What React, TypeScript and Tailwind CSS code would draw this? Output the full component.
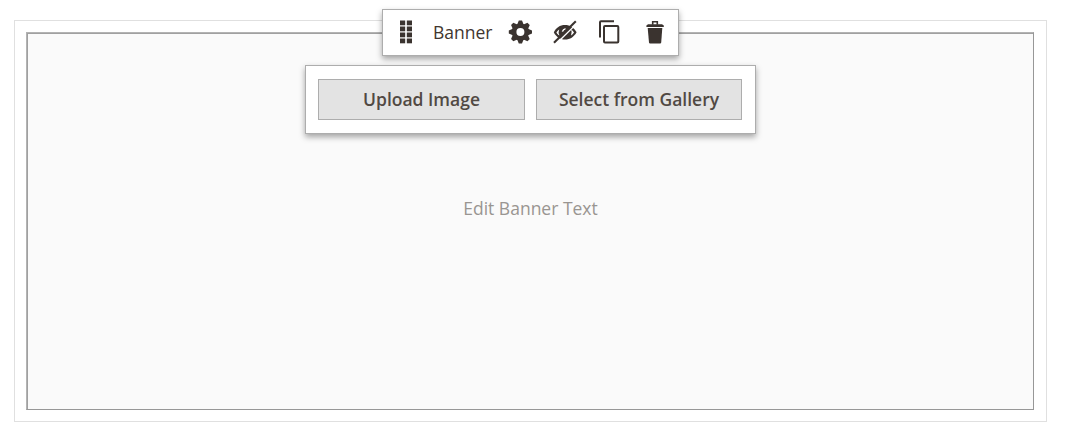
import React from "react";

function GripIcon() {
  return (
    <svg className="block h-6 w-[12px]" viewBox="0 0 12 24" fill="#3a332f">
      {[0.5, 6.5, 12.5, 18.5].map((y) => (
        <React.Fragment key={y}>
          <rect x="0" y={y} width="5.2" height="4.8" />
          <rect x="6.8" y={y} width="5.2" height="4.8" />
        </React.Fragment>
      ))}
    </svg>
  );
}

function GearIcon() {
  return (
    <svg className="block size-6" viewBox="0 0 24 24" fill="#3a332f">
      <g transform="translate(0.4 0)">
        {[0, 45, 90, 135, 180, 225, 270, 315].map((a) => (
          <path key={a} d="M8.6 5 10.4 0.4h3.2L15.400 5z" transform={`rotate(${a} 12 12)`} />
        ))}
        <path fillRule="evenodd" d="M12 3.4a8.6 8.6 0 1 0 0 17.2 8.6 8.6 0 0 0 0-17.2zm0 4.6a4 4 0 1 1 0 8 4 4 0 0 1 0-8z" />
      </g>
    </svg>
  );
}

function HideIcon() {
  return (
    <svg className="block size-6" viewBox="0 0 24 24">
      <path fill="#3a332f" d="M.8 12.300C3 7.600 7 5 12 5s9 2.600 11.600 7.300C21 16.900 17 19.600 12 19.600S3 16.900.8 12.300z" />
      <path fill="#fff" d="M6.200 9.500a7 7 0 0 0 .3 6C5.100 14.700 4.200 13.700 3.400 12.400c.8-1.200 1.700-2.100 2.800-2.900z" />
      <path fill="#fff" d="M18.100 9.500c1.200.7 2.100 1.600 2.900 2.900-.8 1.300-1.800 2.200-3 3a7 7 0 0 0 .1-5.900z" />
      <path fill="#fff" d="M8.700 11.500Q9.500 8.500 12.500 8v1.500q-1.800.6-2.300 2.300z" />
      <path d="M3 24 25 2.400" stroke="#fff" strokeWidth="1.400" />
      <path d="M1 22.800 22.800 1.200" stroke="#3a332f" strokeWidth="2.100" />
    </svg>
  );
}

function CopyIcon() {
  return (
    <svg className="block h-6 w-[21px]" viewBox="0 0 21 24" fill="none" stroke="#3a332f" strokeWidth="2">
      <path d="M1 17.5V2.200q0-1 1-1h13" />
      <rect x="5" y="6" width="14.300" height="16.500" rx="1" />
    </svg>
  );
}

function TrashIcon() {
  return (
    <svg className="block h-6 w-[18px]" viewBox="0 0 18 24" fill="#3a332f">
      <path d="M6.700 4.800V1.700h4.600v3.100" fill="none" stroke="#3a332f" strokeWidth="1.600" />
      <path d="M2 4.300h14l1.800 1.200v1.500H.4V5.500z" />
      <path d="M1.700 7.900h14.600L15.200 22.600q-.1 1-1.100 1H4.100q-1 0-1.100-1z" />
    </svg>
  );
}

export default function App() {
  return (
    <div className="h-[438px] w-[1066px] bg-white pt-5 pl-[14px] font-['Open_Sans',sans-serif] text-[#41362f]">
      <div className="relative h-[402px] w-[1033px] border border-[#e0e0e0] p-[11px] pr-3">
        <div className="h-[378px] border border-[#b3b3b3] border-r-[#979797] border-b-[#979797]">
          <div className="flex h-[376px] flex-col items-center border-t border-l border-[#a0a0a0] bg-[#fafafa] pt-[31px]">
            <div className="flex h-[69px] w-[451px] shrink-0 gap-[11px] border border-[#adadad] bg-white px-3 py-[13px] shadow-[0_3px_6px_rgba(0,0,0,0.35)]">
              <button className="h-[41px] w-[207px] border border-[#adadad] bg-[#e3e3e3] text-[17.5px] font-semibold text-[#514943]">
                Upload Image
              </button>
              <button className="h-[41px] w-[206px] border border-[#adadad] bg-[#e3e3e3] text-[17.5px] font-semibold text-[#514943]">
                Select from Gallery
              </button>
            </div>
            <div className="mt-[62px] text-[17.5px] leading-6 text-[#999591]">Edit Banner Text</div>
          </div>
        </div>
        <div className="absolute top-[-12px] left-[367px] flex h-[47px] w-[297px] items-start border border-[#adadad] bg-white pt-[10px] pl-[17px] shadow-[0_3px_6px_rgba(0,0,0,0.35)]">
          <GripIcon />
          <span className="ml-[21px] w-[60px] text-[17.5px] leading-6 whitespace-nowrap">Banner</span>
          <div className="ml-[15px]"><GearIcon /></div>
          <div className="ml-[21px]"><HideIcon /></div>
          <div className="ml-[22px]"><CopyIcon /></div>
          <div className="ml-[26px]"><TrashIcon /></div>
        </div>
      </div>
    </div>
  );
}
